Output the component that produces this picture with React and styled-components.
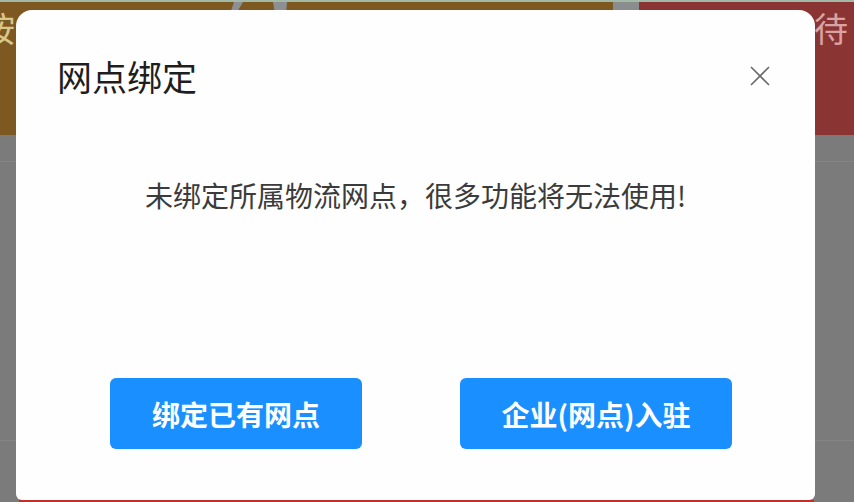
import React from "react";
import styled, { createGlobalStyle } from "styled-components";

const GlobalStyle = createGlobalStyle`
body {
  margin: 0;
  font-family: "Noto Sans CJK SC", "Noto Sans", sans-serif;
}
`

const Page = styled.div`
position: relative;
width: 854px;
height: 502px;
overflow: hidden;
display: flex;
flex-direction: column;
background: #7b7b7b;
`

/* 遮罩 뒤 페이지 */
const TopBar = styled.div`
display: flex;
height: 133px;
border-top: 2px solid #a2b9a8;
`

const BarSection = styled.div`
flex: ${(props) => props.flex};
background: ${(props) => props.bg};
position: relative;
overflow: hidden;
display: flex;
align-items: flex-start;
justify-content: ${(props) => props.justify || "flex-start"};
`

const BarText = styled.span`
font-size: 34px;
line-height: 1;
margin-top: 9px;
margin-left: ${(props) => props.ml || "0"};
margin-right: ${(props) => props.mr || "0"};
color: ${(props) => props.color};
`

const Body = styled.div`
flex: 1;
display: flex;
flex-direction: column;
`

const Row = styled.div`
height: ${(props) => props.h};
border-bottom: 1px solid #858585;
`

const BottomLine = styled.div`
height: 2px;
background: #c0302a;
margin: 0 40px 0 19px;
`

const Modal = styled.div`
position: absolute;
top: 10px;
left: 16px;
width: 799px;
height: 490px;
background: #fefefe;
border-radius: 16px 16px 6px 6px;
display: flex;
flex-direction: column;
`

const Header = styled.div`
display: flex;
justify-content: space-between;
align-items: center;
padding: 49px 45px 0 41px;
`

const Title = styled.h2`
margin: 0;
font-size: 35px;
line-height: 34px;
font-weight: 400;
color: #1e1e1e;
`

const CloseButton = styled.button`
border: none;
background: none;
padding: 0;
width: 20px;
height: 20px;
cursor: pointer;
display: flex;
`

const Message = styled.p`
margin: 88px 0 0;
text-align: center;
font-size: 28px;
line-height: 28px;
color: #3b3b3b;
`

const ButtonRow = styled.div`
display: flex;
justify-content: space-between;
margin-top: 169px;
padding: 0 83px 0 94px;
`

const ActionButton = styled.button`
width: ${(props) => props.w};
height: 71px;
border: none;
border-radius: 6px;
background: #1a8fff;
color: #ffffff;
font-family: inherit;
font-size: 28px;
font-weight: 700;
cursor: pointer;
`

function App() {
  return (
    <>
      <GlobalStyle />
      <Page>
        <TopBar>
          <BarSection flex="0 0 613px" bg="#7d5820">
            <BarText color="#d8c68a" ml="-19px">按</BarText>
            <svg width="80" height="14" style={{ position: "absolute", left: 220, top: 0 }}>
              <path d="M14 0 L23 0 L16 12 L10 12 Z" fill="#8d9092" />
              <path d="M53 0 L67 0 L66 12 L55 12 Z" fill="#8d9092" />
            </svg>
          </BarSection>
          <BarSection flex="0 0 26px" bg="#8a8d8e" />
          <BarSection flex="1" bg="#8a3434" justify="flex-end">
            <BarText color="#d9a3a3" mr="6px">待</BarText>
          </BarSection>
        </TopBar>
        <Body>
          <Row h="26px" />
          <Row h="278px" />
        </Body>
        <BottomLine />

        <Modal>
          <Header>
            <Title>网点绑定</Title>
            <CloseButton aria-label="关闭">
              <svg width="20" height="20" viewBox="0 0 20 20">
                <path d="M1 1 L19 19 M19 1 L1 19" stroke="#6a6a6a" strokeWidth="1.6" fill="none" />
              </svg>
            </CloseButton>
          </Header>
          <Message>未绑定所属物流网点，很多功能将无法使用!</Message>
          <ButtonRow>
            <ActionButton w="252px">绑定已有网点</ActionButton>
            <ActionButton w="272px">企业(网点)入驻</ActionButton>
          </ButtonRow>
        </Modal>
      </Page>
    </>
  )
}

export default App
